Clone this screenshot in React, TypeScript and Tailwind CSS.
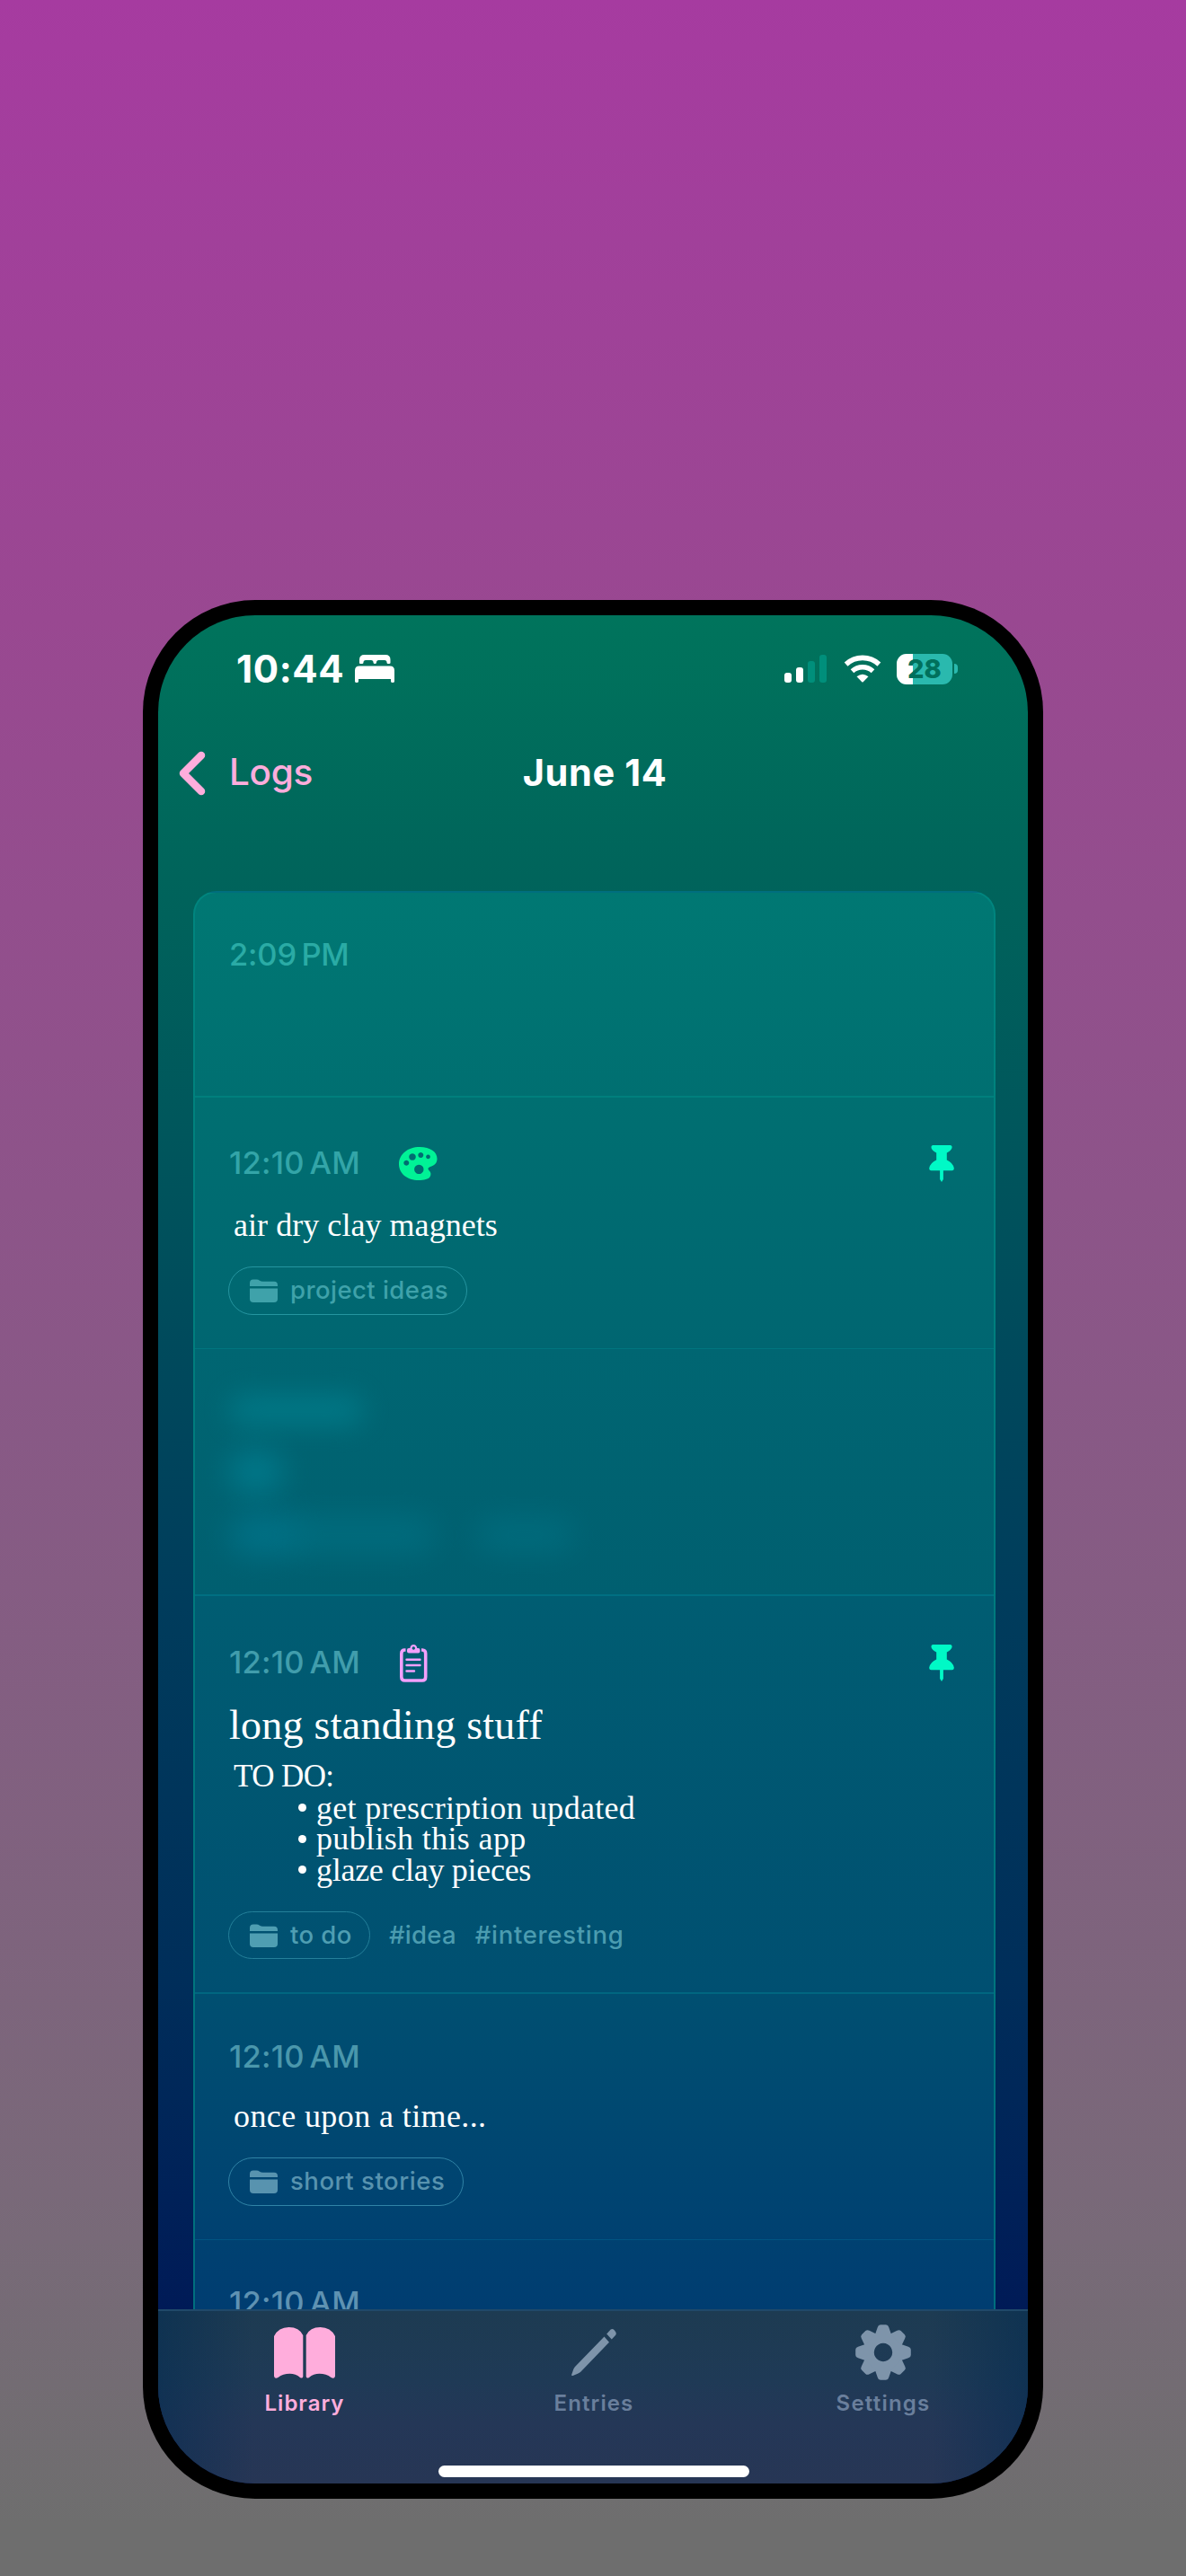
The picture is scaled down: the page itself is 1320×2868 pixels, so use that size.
import React from "react";

function Bed() {
  return (
    <svg viewBox="0 0 44 31" className="h-[31px] w-[44px] shrink-0" fill="#fff">
      <path d="M5 9V5.5Q5 0 10.5 0H34Q39.500 0 39.500 5.500V9Q39.500 10 38 10H37Q35.500 10 35.500 8.500Q35.500 6 33 6H26.500Q24 6 24 8.500Q24 10 22.200 10Q20.500 10 20.500 8.500Q20.500 6 18 6H12Q9.500 6 9.500 8.500Q9.500 10 8 10H6Q5 10 5 9Z" />
      <path d="M5 12.500H39Q44 12.500 44 17.500V29.500Q44 31 42 31Q40 31 40 29.500V27H4V29.500Q4 31 2 31Q0 31 0 29.500V17.500Q0 12.500 5 12.500Z" />
    </svg>
  );
}

function Wifi() {
  return (
    <svg viewBox="0 0 42 31" className="h-[31px] w-[42px]" fill="none" stroke="#fff">
      <path d="M2.600 10.600A27 27 0 0 1 39.400 10.600" strokeWidth="5.600" />
      <path d="M9.500 18.200A17 17 0 0 1 32.500 18.200" strokeWidth="5.400" />
      <path d="M14.500 24.300Q21 19 27.500 24.300L21.700 30.200Q21 30.800 20.300 30.200Z" fill="#fff" stroke="none" />
    </svg>
  );
}

function Battery() {
  return (
    <div className="flex items-center gap-[2px]">
      <div className="relative flex h-[34px] w-[62px] items-center justify-center overflow-hidden rounded-[11px] bg-[#2ab9ae]">
        <div className="absolute inset-y-0 left-0 w-[18px] bg-white" />
        <span className="relative font-['Inter'] text-[29px] leading-none font-extrabold tracking-[0.2px] text-[#00705c]">28</span>
      </div>
      <div className="h-[11px] w-[4px] rounded-r-full bg-[#2ab9ae]" />
    </div>
  );
}

function Palette() {
  return (
    <svg viewBox="0 0 43 37" className="h-[37px] w-[43px]">
      <path
        fill="#00f296"
        fillRule="evenodd"
        d="M23 0C35 0 42.500 5.500 42.500 13C42.500 18 39.500 20.500 35.500 21.800C32 22.900 31.800 24.500 33.800 26.500C35.800 28.500 36 31 34.500 33.300C32.800 36 28 37 22 37C9 37 0 29.500 0 19C0 8 10 0 23 0ZM15 7.200a3.800 3.800 0 1 0 0.010 0ZM24.300 6.100a3 3 0 1 0 0.010 0ZM32.500 8.500a2.400 2.400 0 1 0 0.010 0ZM8.300 14.800a3 3 0 1 0 0.010 0ZM22.300 19.700a5.200 5.200 0 1 0 0.010 0Z"
      />
    </svg>
  );
}

function Clipboard() {
  return (
    <svg viewBox="0 0 31 42" className="h-[42px] w-[31px]" fill="none" stroke="#f2a0fb">
      <path d="M6.500 6H5.500Q1.800 6 1.800 10V36Q1.800 40 5.500 40H25Q28.700 40 28.700 36V10Q28.700 6 25 6H24" strokeWidth="3.600" />
      <path d="M7.500 16.800H22.500M7.500 23H22.500M7.500 29.500H16" strokeWidth="2.400" strokeLinecap="round" />
      <path
        fill="#f2a0fb"
        stroke="none"
        fillRule="evenodd"
        d="M8 6Q8 4 10 4H11.300Q12 0 15.300 0Q18.600 0 19.300 4H20.500Q22.500 4 22.500 6V7.500Q22.500 9.500 20.500 9.500H10Q8 9.500 8 7.500ZM15.300 2.300a1.700 1.700 0 1 0 0.010 0Z"
      />
    </svg>
  );
}

function Pin() {
  return (
    <svg viewBox="0 0 28 41" className="h-[41px] w-[28px]" fill="#00f9c6">
      <path d="M4 0H23.500Q26 0.300 25.500 3Q24.500 6 19.800 8.500V16.500Q26.500 19.500 27.800 25.500Q28 28 25.500 28.300H2.500Q0 28 0.200 25.500Q1.500 19.500 8.200 16.500V8.500Q3.500 6 2.500 3Q2 0.300 4 0Z" />
      <path d="M12.100 27H15.900V38L14 41L12.100 38Z" />
    </svg>
  );
}

function Folder() {
  return (
    <svg viewBox="0 0 31 26" className="h-[26px] w-[31px]" fill="currentColor">
      <path d="M0 8V4.500Q0 0.500 4 0.500H7.500Q9.500 0.500 11 1.700Q12.500 2.800 14.500 2.800H27Q31 2.800 31 6.800V8Z" />
      <path d="M0 10.500H31V22Q31 26 27 26H4Q0 26 0 22Z" />
    </svg>
  );
}

function Book() {
  return (
    <svg viewBox="0 0 68 57" className="h-[57px] w-[68px]" fill="#ffaddc">
      <path d="M0 10Q5 0 16.500 0Q28 0 32.300 9V55Q31.500 57.500 29 56Q24 51.800 17.500 51.800Q10 51.800 4.500 56Q0.800 58 0 54.500Z" />
      <path d="M35.700 9Q40 0 51.500 0Q63 0 68 10V54.500Q67.200 58 63.500 56Q58 51.800 50.500 51.800Q44 51.800 39 56Q36.500 57.500 35.700 55Z" />
    </svg>
  );
}

function Pencil() {
  return (
    <svg viewBox="0 0 50 54" className="h-[54px] w-[50px]" fill="#7e94aa">
      <path d="M36.500 9.500L42 15.800L10.500 48.500Q9 50 7 50.800L1.500 53Q-0.300 53.500 0.200 51.700L2.200 46Q2.800 44.200 4 42.900Z" />
      <path d="M39.200 6.500L43.500 1.800Q45.500 0.200 47.500 2L49 4Q50.500 6.200 49 8L44.800 12.500Z" />
    </svg>
  );
}

function Gear() {
  return (
    <svg viewBox="-31 -31 62 62" className="h-[62px] w-[62px]" fill="#7e94aa">
      <path fillRule="evenodd" d="M0 -22.500a22.500 22.500 0 1 0 0.010 0ZM0 -10.200a10.200 10.200 0 1 1 -0.010 0Z" />
      {[0, 45, 90, 135, 180, 225, 270, 315].map((a) => (
        <path key={a} transform={`rotate(${a})`} d="M-9 -20L-6.200 -28Q-5.500 -30.800 -3 -30.800H3Q5.500 -30.800 6.200 -28L9 -20Z" />
      ))}
    </svg>
  );
}

function Time({ children, tone }: { children: string; tone: string }) {
  return (
    <span className={`font-['Inter'] text-[34.500px] leading-[40px] font-medium whitespace-nowrap [word-spacing:-3.500px] ${tone}`}>
      {children}
    </span>
  );
}

function FolderPill({ label, tone, size, tracking }: { label: string; tone: string; size: string; tracking: string }) {
  return (
    <div className={`flex items-center gap-[14px] rounded-[27px] border-[1.500px] pl-[23px] ${size} ${tone}`}>
      <Folder />
      <span className={`font-['Inter'] text-[27.500px] leading-none font-medium whitespace-nowrap ${tracking}`}>{label}</span>
    </div>
  );
}

const body = "font-['Liberation_Serif'] text-[36px] text-white whitespace-nowrap";

export default function App() {
  return (
    <div className="flex h-[2868px] w-[1320px] justify-center overflow-hidden bg-[linear-gradient(180deg,#a63ba0_0%,#994891_24%,#8a5787_52%,#786a78_87%,#6e6e6e_98%,#6e6e6e_100%)] pt-[668px]">
      <div className="h-[2114px] w-[1002px] rounded-[125px] bg-black p-[17px]">
        <div className="flex h-full w-full flex-col overflow-hidden rounded-[108px] bg-[linear-gradient(180deg,#00745c_0%,#00645b_14%,#00575c_27%,#004a5c_39%,#003c5c_53%,#002e5a_73%,#001a57_91%)]">
          <header className="shrink-0">
            <div className="flex h-[119px] items-center justify-between pr-[78px] pl-[87px]">
              <div className="flex items-center gap-[11px]">
                <span className="w-[121px] font-['Inter'] text-[42px] leading-none font-bold tracking-[0.600px] text-white">10:44</span>
                <Bed />
              </div>
              <div className="flex items-center">
                <div className="mr-[19px] flex h-[31px] items-end gap-[4.500px]">
                  <div className="h-[11.500px] w-[8.500px] rounded-[3px] bg-white" />
                  <div className="h-[17px] w-[8.500px] rounded-[3px] bg-white" />
                  <div className="h-[24px] w-[8.500px] rounded-[3px] bg-[#008f7b]" />
                  <div className="h-[31px] w-[8.500px] rounded-[3px] bg-[#008f7b]" />
                </div>
                <div className="mr-[17px]">
                  <Wifi />
                </div>
                <Battery />
              </div>
            </div>
            <div className="grid h-[113px] grid-cols-3 items-center pl-[22px]">
              <div className="flex items-center gap-[25px]">
                <svg viewBox="0 0 32 50" className="h-[50px] w-[32px]" fill="none" stroke="#ffaddc" strokeWidth="8.500" strokeLinecap="round" strokeLinejoin="round">
                  <path d="M26 5L6 25L26 45" />
                </svg>
                <span className="font-['Inter'] text-[40.500px] leading-none font-medium tracking-[-0.300px] text-[#fcaddc]">Logs</span>
              </div>
              <h1 className="-ml-[18px] text-center font-['Inter'] text-[41.500px] leading-none font-bold tracking-[0.600px] whitespace-nowrap text-white">June 14</h1>
              <div />
            </div>
          </header>

          <main className="mt-[75px] mr-[36px] ml-[39px] flex min-h-0 flex-1 flex-col overflow-hidden rounded-t-[26px] border-x-[2.500px] border-t-[2.500px] border-[#008f87]/60 bg-[linear-gradient(180deg,#007873_0%,#006f71_14.500%,#006671_32%,#005d72_49.600%,#004f71_78%,#003d71_100%)]">
            <section className="h-[226px] shrink-0 px-[38px] pt-[49px]">
              <Time tone="text-[#2aaba5] tracking-[-0.200px]">2:09 PM</Time>
            </section>

            <section className="h-[281px] shrink-0 border-t-2 border-[#007f7d] px-[38px] pt-[53px]">
              <div className="flex h-[40px] items-center">
                <Time tone="text-[#33a5a8] tracking-[0.200px]">12:10 AM</Time>
                <div className="ml-[43px]">
                  <Palette />
                </div>
                <div className="mr-[6px] ml-auto">
                  <Pin />
                </div>
              </div>
              <p className={`mt-[31px] ml-[5px] leading-[36px] tracking-[0.050px] ${body}`}>air dry clay magnets</p>
              <div className="-ml-px flex pt-[28px]">
                <FolderPill label="project ideas" tone="border-[#2595a0] text-[#3fa2aa]" size="h-[54px] w-[266px]" tracking="tracking-[0.450px]" />
              </div>
            </section>

            <section className="flex h-[274px] shrink-0 flex-col border-t border-[#00757f] bg-[linear-gradient(180deg,#006672,#005f70)] px-[38px] pt-[51px]">
              <div className="h-[34px] w-[150px] rounded-full bg-[#00808f] opacity-70 blur-[15px]" />
              <div className="mt-[29px] h-[46px] w-[60px] rounded-full bg-[#007f92] opacity-80 blur-[17px]" />
              <div className="mt-[25px] flex items-center">
                <div className="h-[44px] w-[80px] rounded-full bg-[#007a92] opacity-65 blur-[17px]" />
                <div className="-ml-[20px] h-[42px] w-[170px] rounded-full bg-[#007588] opacity-55 blur-[17px]" />
                <div className="ml-[44px] h-[36px] w-[110px] rounded-full bg-[#007588] opacity-55 blur-[17px]" />
              </div>
            </section>

            <section className="h-[443px] shrink-0 border-t-2 border-[#006f82] px-[38px] pt-[54px]">
              <div className="flex h-[40px] items-center">
                <Time tone="text-[#419dac] tracking-[0.200px]">12:10 AM</Time>
                <div className="ml-[44px] pt-[2px]">
                  <Clipboard />
                </div>
                <div className="mr-[6px] ml-auto">
                  <Pin />
                </div>
              </div>
              <h2 className="mt-[25px] font-['Liberation_Serif'] text-[46px] leading-[50px] tracking-[0.250px] whitespace-nowrap text-white">long standing stuff</h2>
              <div className={`mt-[15px] ml-[5px] leading-[34.500px] ${body}`}>
                <p className="text-[35px] tracking-[-0.600px]">TO DO:</p>
                <ul>
                  <li className="flex items-center pl-[72px]">
                    <span className="mr-[11px] size-[9px] rounded-full bg-white" />
                    <span className="tracking-[0.300px]">get prescription updated</span>
                  </li>
                  <li className="flex items-center pl-[72px]">
                    <span className="mr-[11px] size-[9px] rounded-full bg-white" />
                    <span className="tracking-[0.350px]">publish this app</span>
                  </li>
                  <li className="flex items-center pl-[72px]">
                    <span className="mr-[11px] size-[9px] rounded-full bg-white" />
                    <span className="tracking-[-0.280px]">glaze clay pieces</span>
                  </li>
                </ul>
              </div>
              <div className="mt-[29px] -ml-px flex items-center font-['Inter'] text-[27.500px] leading-none font-medium text-[#4b9cb0]">
                <FolderPill label="to do" tone="border-[#24809a] text-[#4f9eb2]" size="h-[53px] w-[158px]" tracking="tracking-[0.400px]" />
                <span className="ml-[21px] tracking-[0.250px]">#idea</span>
                <span className="ml-[21px] tracking-[0.700px]">#interesting</span>
              </div>
            </section>

            <section className="h-[275px] shrink-0 border-t-2 border-[#006680] px-[38px] pt-[50px]">
              <div className="flex h-[40px] items-center">
                <Time tone="text-[#4a97ac] tracking-[0.200px]">12:10 AM</Time>
              </div>
              <p className={`mt-[28px] ml-[5px] leading-[36px] tracking-[0.400px] ${body}`}>once upon a time...</p>
              <div className="-ml-px flex pt-[28px]">
                <FolderPill label="short stories" tone="border-[#3083a6] text-[#5893af]" size="h-[54px] w-[262px]" tracking="tracking-[0.550px]" />
              </div>
            </section>

            <section className="h-[275px] shrink-0 border-t border-[#005482] px-[38px] pt-[50px]">
              <div className="flex h-[40px] items-center">
                <Time tone="text-[#5f92b2] tracking-[0.200px]">12:10 AM</Time>
              </div>
            </section>
          </main>

          <nav className="h-[194px] shrink-0 border-t-2 border-[#20496a] bg-[linear-gradient(90deg,rgba(0,42,80,.5)_0%,rgba(0,42,80,0)_11%,rgba(0,42,80,0)_89%,rgba(0,42,80,.5)_100%),linear-gradient(180deg,#1d3b52_0%,#1f3a56_40%,#243757_65%,#273655_100%)] pl-[2px]">
            <div className="flex">
              <div className="flex flex-1 flex-col items-center">
                <div className="flex h-[92px] items-center">
                  <Book />
                </div>
                <span className="font-['Inter'] text-[24px] leading-[21px] font-semibold tracking-[1px] text-[#ffaddc]">Library</span>
              </div>
              <div className="flex flex-1 flex-col items-center">
                <div className="flex h-[92px] items-center">
                  <Pencil />
                </div>
                <span className="font-['Inter'] text-[24px] leading-[21px] font-semibold tracking-[1.100px] text-[#6a7f9c]">Entries</span>
              </div>
              <div className="flex flex-1 flex-col items-center">
                <div className="flex h-[92px] items-center">
                  <Gear />
                </div>
                <span className="font-['Inter'] text-[24px] leading-[21px] font-semibold tracking-[1.200px] text-[#6a7f9c]">Settings</span>
              </div>
            </div>
            <div className="mx-auto mt-[59px] h-[13px] w-[346px] rounded-full bg-white" />
          </nav>
        </div>
      </div>
    </div>
  );
}
